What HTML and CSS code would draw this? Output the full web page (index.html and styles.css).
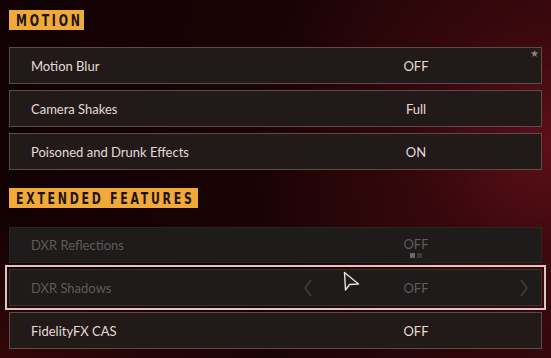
FILE: index.html
```html
<!DOCTYPE html>
<html>
<head>
<meta charset="utf-8">
<link rel="stylesheet" href="styles.css">
</head>
<body>
<div class="page">
  <section class="section">
    <div class="badge badge-motion"><span class="badge-text">MOTION</span></div>
    <div class="list">
      <div class="row">
        <span class="label">Motion Blur</span>
        <span class="value">OFF</span>
        <span class="star">★</span>
      </div>
      <div class="row">
        <span class="label">Camera Shakes</span>
        <span class="value">Full</span>
      </div>
      <div class="row">
        <span class="label">Poisoned and Drunk Effects</span>
        <span class="value">ON</span>
      </div>
    </div>
  </section>
  <section class="section second">
    <div class="badge badge-ext"><span class="badge-text">EXTENDED FEATURES</span></div>
    <div class="list">
      <div class="row dim">
        <span class="label">DXR Reflections</span>
        <span class="value">OFF
          <span class="dots"><i class="dot on"></i><i class="dot"></i></span>
        </span>
      </div>
      <div class="row dim focused">
        <span class="label">DXR Shadows</span>
        <span class="value picker">
          <svg class="chev" width="10" height="18" viewBox="0 0 10 18"><path d="M8 1 L2 9 L8 17" fill="none" stroke="#3e3a39" stroke-width="2"/></svg>
          <span>OFF</span>
          <svg class="chev" width="10" height="18" viewBox="0 0 10 18"><path d="M2 1 L8 9 L2 17" fill="none" stroke="#3e3a39" stroke-width="2"/></svg>
        </span>
        <svg class="cursor" width="18" height="21" viewBox="0 0 18 21"><path d="M1.5 1.5 L2.5 19 L6.5 13.5 L15.5 13 Z" fill="none" stroke="#e6e2e0" stroke-width="1.4" stroke-linejoin="round"/></svg>
      </div>
      <div class="row">
        <span class="label">FidelityFX CAS</span>
        <span class="value">OFF</span>
      </div>
    </div>
  </section>
</div>
</body>
</html>
```

FILE: styles.css
```css
html, body {
  margin: 0;
  padding: 0;
}
body {
  width: 551px;
  height: 358px;
  overflow: hidden;
  font-family: Lato, "Open Sans", sans-serif;
  background:
    radial-gradient(ellipse 55% 75% at 100% 40%, rgba(95, 16, 24, 0.95) 0%, rgba(70, 10, 16, 0.5) 45%, rgba(40, 4, 8, 0) 100%),
    radial-gradient(ellipse 50% 40% at 0% 100%, rgba(60, 8, 12, 0.8) 0%, rgba(30, 3, 6, 0) 100%),
    linear-gradient(100deg, #110103 0%, #1a0305 50%, #30070b 100%);
}
.page {
  padding: 10px 9px 0 9px;
}
.section.second {
  margin-top: 18px;
}
.badge {
  display: block;
  box-sizing: border-box;
  height: 20px;
  line-height: 21px;
  background: #f1a93a;
  color: #1c1510;
  font-family: "DejaVu Sans Condensed", "DejaVu Sans", sans-serif;
  font-weight: bold;
  font-size: 16px;
  letter-spacing: 3.6px;
  padding: 0 0 0 7px;
  overflow: hidden;
  white-space: nowrap;
}
.badge-motion {
  width: 75px;
}
.badge-ext {
  width: 189px;
}
.badge-text {
  display: inline-block;
  transform: scaleX(0.76);
  transform-origin: left center;
}
.list {
  margin-top: 17px;
  display: flex;
  flex-direction: column;
  gap: 6px;
}
.section.second .list {
  margin-top: 19px;
}
.row {
  position: relative;
  box-sizing: border-box;
  height: 37px;
  display: flex;
  align-items: center;
  background: #221a19;
  border: 1px solid #5c4c49;
  color: #e2dad6;
  font-size: 13px;
}
.label {
  width: 260px;
  padding-left: 21px;
}
.value {
  flex: 1;
  text-align: center;
  position: relative;
}
.star {
  position: absolute;
  top: 0;
  right: 2px;
  font-size: 10px;
  color: #8e8482;
  font-family: "DejaVu Sans", sans-serif;
}
.row.dim {
  background: #1e1b1b;
  border-color: #2a2424;
  color: #5e5a59;
  height: 36px;
}
.row.dim .value {
  margin-top: -2px;
}
.dots {
  position: absolute;
  left: 50%;
  top: 17px;
  margin-left: -6px;
  display: flex;
  gap: 2px;
}
.dot {
  display: block;
  width: 5px;
  height: 5px;
  background: #3e3a3a;
}
.dot.on {
  background: #6a6664;
}
.row.focused {
  height: 37px;
  outline: 2px solid #d7c7c3;
  outline-offset: 2px;
  border-color: #3a302e;
}
.row.focused .value {
  margin-top: 0;
}
.picker {
  display: flex;
  justify-content: space-between;
  align-items: center;
  padding: 0 12px 0 12px;
}
.cursor {
  position: absolute;
  left: 333px;
  top: 1px;
}
```
